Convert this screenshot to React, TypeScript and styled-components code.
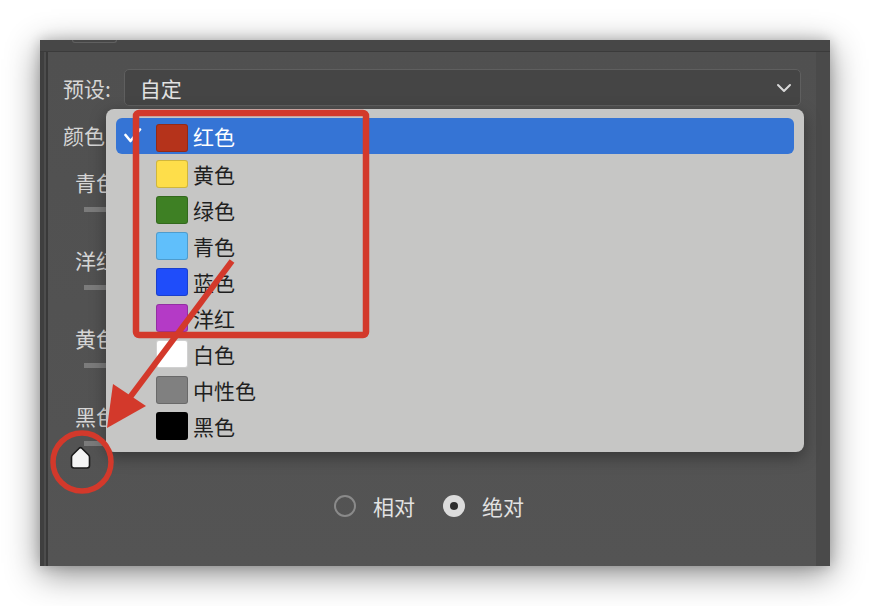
import React from "react";
import styled, { createGlobalStyle } from "styled-components";

const GlobalStyle = createGlobalStyle`
  html, body { margin: 0; padding: 0; background: #ffffff; }
  body { font-family: "Noto Sans CJK SC", "Noto Sans", sans-serif; }
  * { box-sizing: border-box; }
`;

const Page = styled.div`
  position: relative;
  width: 870px;
  height: 606px;
  padding: 40px 40px 0 40px;
  overflow: hidden;
`;

const Panel = styled.div`
  width: 790px;
  height: 526px;
  display: flex;
  flex-direction: column;
  background: #535353;
  box-shadow: 0 8px 32px rgba(0, 0, 0, 0.45), 0 0 12px rgba(0, 0, 0, 0.2);
`;

const TopBand = styled.div`
  height: 12px;
  flex: none;
  background: #474747;
  border-bottom: 1px solid #3b3b3b;
  padding-left: 32px;
`;

const TopButton = styled.div`
  width: 45px;
  height: 3px;
  border: 1px solid #606060;
  border-top: none;
  border-radius: 0 0 4px 4px;
`;

const BodyRow = styled.div`
  flex: 1;
  display: flex;
  min-height: 0;
`;

const LeftRail = styled.div`
  width: 8px;
  flex: none;
  background: #4d4d4d;
  border-left: 4px solid #3f3f3f;
  border-right: 2px solid #393939;
`;

const RightRail = styled.div`
  width: 14px;
  flex: none;
  background: #4a4a4a;
`;

const Main = styled.div`
  position: relative;
  flex: 1;
  display: flex;
  flex-direction: column;
  padding: 17px 15px 0 15px;
  background: linear-gradient(180deg, #505050 0%, #545454 100%);
`;

const Row = styled.div`
  display: flex;
  align-items: center;
  gap: 13px;
`;

const Label = styled.div<{ $indent?: number }>`
  font-size: 21px;
  line-height: 30px;
  height: 30px;
  color: #d6d6d6;
  margin-left: ${(p) => p.$indent ?? 0}px;
  white-space: nowrap;
`;

const Select = styled.div`
  flex: 1;
  height: 37px;
  display: flex;
  align-items: center;
  justify-content: space-between;
  padding: 0 8px 0 15px;
  background: #454545;
  border: 1px solid #5f5f5f;
  border-radius: 5px;
  font-size: 21px;
  color: #e2e2e2;
`;

const ColorLabelRow = styled.div`
  margin-top: 14px;
`;

const SliderGroup = styled.div<{ $first?: boolean }>`
  display: flex;
  flex-direction: column;
  margin-top: ${(p) => (p.$first ? 17 : 33)}px;
`;

const Track = styled.div`
  margin-top: 10px;
  margin-left: 21px;
  width: 60px;
  height: 5px;
  background: #7b7b7b;
`;

const Thumb = styled.div`
  margin-left: 5px;
  margin-top: -1px;
  width: 25px;
  height: 25px;
`;

const RadioRow = styled.div`
  display: flex;
  align-items: center;
  justify-content: center;
  gap: 28px;
  margin-top: 21px;
  padding-right: 6px;
`;

const RadioItem = styled.div`
  display: flex;
  align-items: center;
  gap: 17px;
  font-size: 21px;
  color: #e2e2e2;
`;

const RadioCircle = styled.div<{ $checked?: boolean }>`
  width: 22px;
  height: 22px;
  border-radius: 50%;
  display: flex;
  align-items: center;
  justify-content: center;
  border: ${(p) => (p.$checked ? "none" : "2px solid #8a8a8a")};
  background: ${(p) => (p.$checked ? "#dcdcdc" : "transparent")};
`;

const RadioDot = styled.div`
  width: 8px;
  height: 8px;
  border-radius: 50%;
  background: #2e2e2e;
`;

const Menu = styled.div`
  position: absolute;
  left: 58px;
  top: 57px;
  width: 698px;
  height: 343px;
  padding: 11px 10px 0 10px;
  background: #c6c6c5;
  border-radius: 8px;
  box-shadow: 0 5px 16px rgba(0, 0, 0, 0.35);
  display: flex;
  flex-direction: column;
`;

const MenuItem = styled.div<{ $selected?: boolean }>`
  height: 36px;
  display: flex;
  align-items: center;
  padding-left: 8px;
  border-radius: 6px;
  margin-top: ${(p) => (p.$selected ? -2 : 0)}px;
  margin-bottom: ${(p) => (p.$selected ? 2 : 0)}px;
  background: ${(p) => (p.$selected ? "#3574d5" : "transparent")};
  color: ${(p) => (p.$selected ? "#ffffff" : "#1f1f1f")};
  font-size: 21px;
`;

const CheckSlot = styled.div`
  width: 32px;
  height: 20px;
  flex: none;
  display: flex;
  align-items: center;
`;

const Swatch = styled.div<{ $color: string; $shift?: number }>`
  width: 32px;
  height: 28px;
  flex: none;
  border-radius: 3px;
  background: ${(p) => p.$color};
  border: 1px solid rgba(0, 0, 0, 0.18);
  margin-right: 5px;
  margin-top: ${(p) => p.$shift ?? 0}px;
`;

const Overlay = styled.svg`
  position: absolute;
  left: 0;
  top: 0;
  pointer-events: none;
`;

const items = [
  { name: "红色", color: "#b5331b" },
  { name: "黄色", color: "#fede4a" },
  { name: "绿色", color: "#3e8024" },
  { name: "青色", color: "#60bffb" },
  { name: "蓝色", color: "#1f4dfa" },
  { name: "洋红", color: "#b43ac6" },
  { name: "白色", color: "#ffffff" },
  { name: "中性色", color: "#808080" },
  { name: "黑色", color: "#000000" },
];

const sliders = ["青色", "洋红", "黄色", "黑色"];

export default function App() {
  return (
    <>
      <GlobalStyle />
      <Page>
        <Panel>
          <TopBand>
            <TopButton />
          </TopBand>
          <BodyRow>
            <LeftRail />
            <Main>
              <Row>
                <Label>预设:</Label>
                <Select>
                  <span>自定</span>
                  <svg width="16" height="10" viewBox="0 0 16 10">
                    <path d="M2 2 L8 8 L14 2" fill="none" stroke="#d8d8d8" strokeWidth="2" strokeLinecap="round" strokeLinejoin="round" />
                  </svg>
                </Select>
              </Row>
              <ColorLabelRow>
                <Label>颜色</Label>
              </ColorLabelRow>
              {sliders.map((s, i) => (
                <SliderGroup key={s} $first={i === 0}>
                  <Label $indent={12}>{s}</Label>
                  <Track />
                  {i === sliders.length - 1 && (
                    <Thumb>
                      <svg width="25" height="25" viewBox="0 0 25 25">
                        <path d="M11.2 3.2 Q12.5 2 13.8 3.2 L20.6 10 Q21.5 11 21.5 12.4 L21.5 20.5 Q21.5 23 19 23 L6 23 Q3.5 23 3.5 20.5 L3.5 12.4 Q3.5 11 4.4 10 Z" fill="#f4f4f4" stroke="#1a1a1a" strokeWidth="1.6" strokeLinejoin="round" />
                      </svg>
                    </Thumb>
                  )}
                </SliderGroup>
              ))}
              <RadioRow>
                <RadioItem>
                  <RadioCircle />
                  <span>相对</span>
                </RadioItem>
                <RadioItem>
                  <RadioCircle $checked>
                    <RadioDot />
                  </RadioCircle>
                  <span>绝对</span>
                </RadioItem>
              </RadioRow>
              <Menu>
                {items.map((it, i) => (
                  <MenuItem key={it.name} $selected={i === 0}>
                    <CheckSlot>
                      {i === 0 && (
                        <svg width="18" height="16" viewBox="0 0 18 16">
                          <path d="M1.5 7 L6.5 13 L16 1.5" fill="none" stroke="#ffffff" strokeWidth="2.6" strokeLinecap="round" strokeLinejoin="round" />
                        </svg>
                      )}
                    </CheckSlot>
                    <Swatch $color={it.color} $shift={i === 0 ? 4 : 0} />
                    <span>{it.name}</span>
                  </MenuItem>
                ))}
              </Menu>
            </Main>
            <RightRail />
          </BodyRow>
        </Panel>
        <Overlay width="870" height="606" viewBox="0 0 870 606">
          <rect x="136" y="113" width="230" height="222" rx="3" fill="none" stroke="#d3392b" strokeWidth="6.5" />
          <line x1="232" y1="261" x2="125" y2="404" stroke="#d3392b" strokeWidth="6" />
          <polygon points="107,428 113,384 146,406" fill="#d3392b" />
          <circle cx="82" cy="462" r="29" fill="none" stroke="#d3392b" strokeWidth="5.5" />
        </Overlay>
      </Page>
    </>
  );
}
